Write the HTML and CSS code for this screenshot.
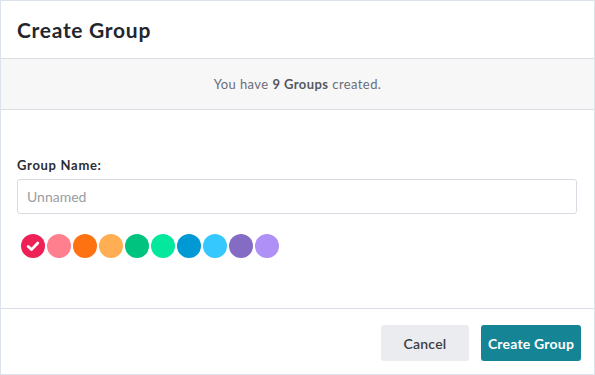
FILE: index.html
```html
<!DOCTYPE html>
<html lang="en">
  <head>
    <meta charset="UTF-8" />
    <meta name="viewport" content="width=device-width, initial-scale=1.0" />
    <title>Create Group</title>
    <link rel="stylesheet" href="styles.css">
  </head>
  <body>
    <div class="modal">
      <div class="modal-header">
        <h1>Create Group</h1>
      </div>

      <div class="modal-notice">
        You have <strong>9 Groups</strong> created.
      </div>

      <div class="modal-body">
        <label class="field-label" for="group-name">Group Name:</label>
        <input class="field-input" id="group-name" type="text" placeholder="Unnamed">

        <div class="swatches">
          <span class="swatch selected" style="background-color: #ee2157">
            <svg viewBox="0 0 24 24" width="24" height="24">
              <path d="M7.2 12.4l3.3 3.2 6.3-6.6" fill="none" stroke="#fff" stroke-width="2.8" stroke-linecap="round" stroke-linejoin="round" />
            </svg>
          </span>
          <span class="swatch" style="background-color: #ff7f8f"></span>
          <span class="swatch" style="background-color: #ff7211"></span>
          <span class="swatch" style="background-color: #ffae53"></span>
          <span class="swatch" style="background-color: #00c37f"></span>
          <span class="swatch" style="background-color: #03e89d"></span>
          <span class="swatch" style="background-color: #0099d4"></span>
          <span class="swatch" style="background-color: #35c8fe"></span>
          <span class="swatch" style="background-color: #846bc3"></span>
          <span class="swatch" style="background-color: #ae90f6"></span>
        </div>
      </div>

      <div class="modal-footer">
        <button class="btn btn-cancel">Cancel</button>
        <button class="btn btn-primary">Create Group</button>
      </div>
    </div>
  </body>
</html>
```

FILE: styles.css
```css
* {
  margin: 0;
  padding: 0;
  box-sizing: border-box;
  font-family: Lato, "Noto Sans", sans-serif;
}

body {
  background-color: #fff;
  color: #2b2d33;
}

.modal {
  width: 595px;
  height: 375px;
  border: 1px solid #dde3ea;
  background-color: #fff;
  display: flex;
  flex-direction: column;
}

.modal-header {
  height: 58px;
  padding-left: 16px;
  display: flex;
  align-items: center;
  border-bottom: 1px solid #dcdce6;
}

.modal-header h1 {
  font-size: 21px;
  font-weight: 700;
  color: #24262d;
  letter-spacing: 0.7px;
}

.modal-notice {
  height: 51px;
  display: flex;
  justify-content: center;
  align-items: center;
  background-color: #f7f7f8;
  border-bottom: 1px solid #dcdce6;
  font-size: 13px;
  letter-spacing: 0.4px;
  color: #6b6e76;
}

.modal-notice strong {
  margin: 0 4px;
  font-weight: 700;
  color: #55585f;
}

.modal-body {
  height: 198px;
  padding: 47px 17px 0 16px;
  display: flex;
  flex-direction: column;
}

.field-label {
  font-size: 13px;
  line-height: 16px;
  font-weight: 700;
  letter-spacing: 0.7px;
  color: #2b2d33;
  margin-bottom: 6px;
}

.field-input {
  height: 35px;
  border: 1px solid #d8dbe1;
  border-radius: 3px;
  padding: 0 9px;
  font-size: 14px;
  color: #2b2d33;
  outline: none;
}

.field-input::placeholder {
  color: #9a9ca4;
}

.swatches {
  display: flex;
  gap: 2px;
  margin-top: 20px;
  padding-left: 4px;
}

.swatch {
  width: 24px;
  height: 24px;
  border-radius: 50%;
  display: flex;
  justify-content: center;
  align-items: center;
}

.modal-footer {
  flex: 1;
  border-top: 1px solid #dcdce6;
  padding: 16px 13px 0 0;
  display: flex;
  justify-content: flex-end;
  align-items: flex-start;
  gap: 12px;
}

.btn {
  height: 36px;
  border: none;
  border-radius: 3px;
  font-size: 14px;
  font-weight: 700;
  letter-spacing: 0.2px;
  cursor: pointer;
}

.btn-cancel {
  width: 88px;
  background-color: #ebecf0;
  color: #3a3c42;
  font-weight: 600;
}

.btn-primary {
  width: 100px;
  background-color: #158596;
  color: #fff;
}
```
